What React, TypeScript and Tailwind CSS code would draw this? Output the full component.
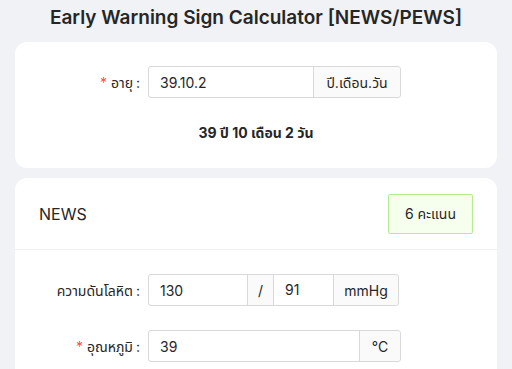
import React from 'react';

const font = { fontFamily: 'Inter, "Noto Sans", "Noto Sans Thai", sans-serif' };

const Label: React.FC<{ text: string; required?: boolean }> = ({ text, required }) => (
  <div className="w-[125px] shrink-0 pr-[8px] text-right text-[14px] text-[#262626] whitespace-nowrap">
    {required && <span className="mr-1 text-[#ff4d4f]">*</span>}
    {text}
    <span className="ml-[3px]">:</span>
  </div>
);

const Addon: React.FC<{ children: React.ReactNode; className?: string }> = ({ children, className = '' }) => (
  <div className={`flex h-full items-center justify-center border-l border-[#d9d9d9] bg-[#fafafa] text-[14px] text-[#262626] ${className}`}>
    {children}
  </div>
);

export default function App() {
  return (
    <div className="min-h-[369px] bg-[#f0f2f5] px-[15px] pt-[4px] text-[#262626]" style={font}>
      <h1 className="text-center text-[19px] font-semibold leading-[28px] text-[#262626]">
        Early Warning Sign Calculator [NEWS/PEWS]
      </h1>

      <div className="mt-[10px] rounded-xl bg-white pt-[24px] pb-[24px]">
        <div className="flex items-center pl-[8px]">
          <Label text="อายุ" required />
          <div className="flex h-[32px] w-[253px] items-center rounded-[3px] border border-[#d9d9d9]">
            <div className="flex-1 px-[11px] text-[14px]">39.10.2</div>
            <Addon className="w-[87px] rounded-r-[3px]">ปี.เดือน.วัน</Addon>
          </div>
        </div>
        <div className="mt-[24px] text-center text-[14px] font-bold leading-[22px]">39 ปี 10 เดือน 2 วัน</div>
      </div>

      <div className="mt-[10px] rounded-t-xl bg-white">
        <div className="flex h-[72px] items-center justify-between border-b border-[#f0f0f0] px-[24px]">
          <div className="text-[16px] text-[#262626]">NEWS</div>
          <div className="flex h-[40px] w-[85px] items-center justify-center rounded-[2px] border border-[#b7eb8f] bg-[#f6ffed] text-[14px]">
            6 คะแนน
          </div>
        </div>
        <div className="pt-[24px] pb-[8px]">
          <div className="flex items-center pl-[8px]">
            <Label text="ความดันโลหิต" />
            <div className="flex h-[32px] w-[251px] items-center rounded-[3px] border border-[#d9d9d9]">
              <div className="w-[98px] px-[11px] text-[14px]">130</div>
              <Addon className="w-[26px]">/</Addon>
              <div className="h-full w-[60px] border-l border-[#d9d9d9] px-[11px] text-[14px] leading-[30px]">91</div>
              <Addon className="flex-1 rounded-r-[3px]">mmHg</Addon>
            </div>
          </div>
          <div className="mt-[24px] flex items-center pl-[8px]">
            <Label text="อุณหภูมิ" required />
            <div className="flex h-[32px] w-[253px] items-center rounded-[3px] border border-[#d9d9d9]">
              <div className="flex-1 px-[11px] text-[14px]">39</div>
              <Addon className="w-[41px] rounded-r-[3px]">°C</Addon>
            </div>
          </div>
        </div>
      </div>
    </div>
  );
}
